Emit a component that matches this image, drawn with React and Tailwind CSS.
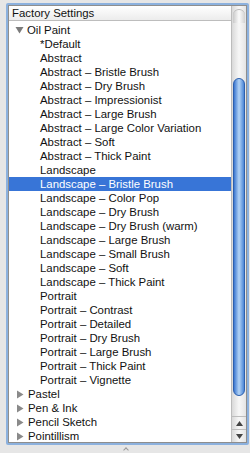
import React from "react";

const font = { fontFamily: '"Liberation Sans", Arial, sans-serif' };

const oil = [
  "*Default",
  "Abstract",
  "Abstract – Bristle Brush",
  "Abstract – Dry Brush",
  "Abstract – Impressionist",
  "Abstract – Large Brush",
  "Abstract – Large Color Variation",
  "Abstract – Soft",
  "Abstract – Thick Paint",
  "Landscape",
  "Landscape – Bristle Brush",
  "Landscape – Color Pop",
  "Landscape – Dry Brush",
  "Landscape – Dry Brush (warm)",
  "Landscape – Large Brush",
  "Landscape – Small Brush",
  "Landscape – Soft",
  "Landscape – Thick Paint",
  "Portrait",
  "Portrait – Contrast",
  "Portrait – Detailed",
  "Portrait – Dry Brush",
  "Portrait – Large Brush",
  "Portrait – Thick Paint",
  "Portrait – Vignette",
];

const collapsed = ["Pastel", "Pen & Ink", "Pencil Sketch", "Pointillism"];

function Down() {
  return (
    <svg width="9" height="8" viewBox="0 0 9 8" className="shrink-0">
      <path d="M0.5 1 L8.5 1 L4.5 7.5 Z" fill="#7b7b7b" />
    </svg>
  );
}
function Right() {
  return (
    <svg width="8" height="9" viewBox="0 0 8 9" className="shrink-0">
      <path d="M1 0.5 L7.5 4.5 L1 8.5 Z" fill="#8a8a8a" />
    </svg>
  );
}

export default function App() {
  return (
    <div className="w-[250px] h-[453px] bg-[#e6e6e6] pt-[3px] pl-[6px] relative" style={font}>
      <div className="w-[243px] h-[442px] rounded-[2px] border-2 border-[#8cb1de] flex">
        <div className="flex-1 flex border border-[#8e8e8e] bg-white overflow-hidden">
          <div className="flex-1 flex flex-col">
            <div className="h-[15px] shrink-0 border-b border-[#bdbdbd] bg-gradient-to-b from-[#ffffff] to-[#ececec] pl-[3px] text-[11.4px] leading-[15px] text-[#111] font-medium">
              Factory Settings
            </div>
            <div className="pt-[2px] text-[11.4px] text-[#111]">
              <div className="h-[14px] flex items-center pl-[6px] gap-[3px]">
                <Down />
                <span className="leading-[14px]">Oil Paint</span>
              </div>
              {oil.map((t) => {
                const sel = t === "Landscape – Bristle Brush";
                return (
                  <div
                    key={t}
                    className={
                      "h-[14px] leading-[14px] pl-[31px] whitespace-nowrap " +
                      (sel ? "bg-[#3875d7] text-white" : "")
                    }
                  >
                    {t}
                  </div>
                );
              })}
              {collapsed.map((t) => (
                <div key={t} className="h-[14px] flex items-center pl-[7px] gap-[4px]">
                  <Right />
                  <span className="leading-[14px]">{t}</span>
                </div>
              ))}
            </div>
          </div>
          <div className="w-[15px] shrink-0 border-l border-[#bcbcbc] bg-gradient-to-r from-[#d9d9d9] via-[#f7f7f7] to-[#e4e4e4] flex flex-col">
            <div className="h-[3px]" />
            <div className="flex-1 relative">
              <div className="absolute left-[1px] right-[1px] top-0 h-[14px] rounded-t-full bg-gradient-to-r from-[#c9c9c9] via-[#fbfbfb] to-[#d2d2d2] border-t border-[#b5b5b5]" />
              <div className="absolute left-[1px] right-[1px] top-[69px] h-[318px] rounded-full border border-[#2c5fae] bg-gradient-to-r from-[#3a76cf] via-[#b4d4f5] to-[#4a85d6]" />
            </div>
            <div className="h-[13px] border-t border-[#bdbdbd] flex items-center justify-center">
              <svg width="7" height="5" viewBox="0 0 7 5"><path d="M3.5 0 L7 5 L0 5 Z" fill="#444" /></svg>
            </div>
            <div className="h-[13px] border-t border-[#bdbdbd] flex items-center justify-center">
              <svg width="7" height="5" viewBox="0 0 7 5"><path d="M0 0 L7 0 L3.5 5 Z" fill="#444" /></svg>
            </div>
          </div>
        </div>
      </div>
      <div className="absolute left-[124px] bottom-[1px] w-[4px] h-[4px] border-l border-t border-[#999] rotate-45" />
    </div>
  );
}
